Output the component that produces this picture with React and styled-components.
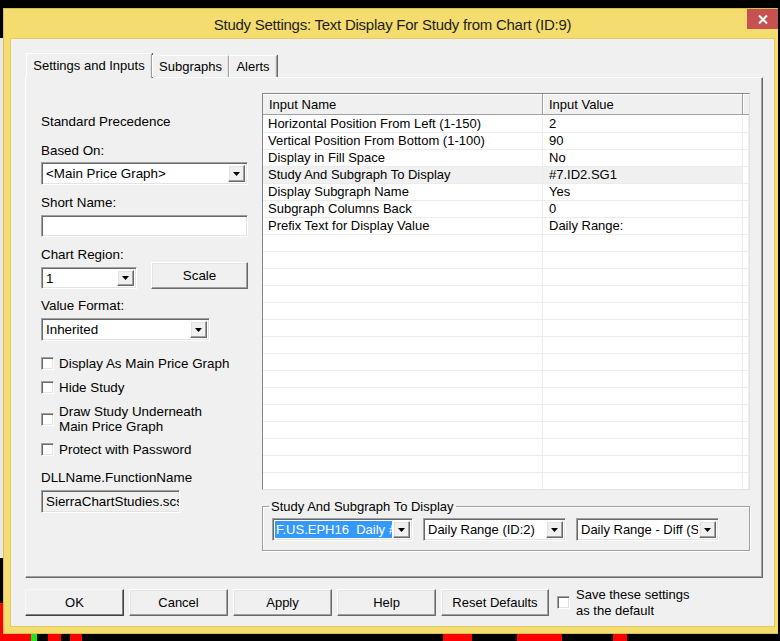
import styled, { createGlobalStyle } from "styled-components";

const GlobalStyle = createGlobalStyle`
  html, body {
    margin: 0;
    padding: 0;
    background: #000;
  }
  * {
    box-sizing: border-box;
  }
`;

const YELLOW = "#f4dd6e";

const Desktop = styled.div`
  width: 780px;
  height: 641px;
  overflow: hidden;
  padding: 8px 0 0 3px;
  font-family: "Liberation Sans", Arial, sans-serif;
  font-size: 13px;
  color: #000;
  background-color: #000;
  background-image:
    linear-gradient(#e9e9e9, #e9e9e9),
    linear-gradient(#ff0000, #ff0000),
    linear-gradient(#ff0000, #ff0000),
    linear-gradient(#19e619, #19e619),
    linear-gradient(#ff0000, #ff0000),
    linear-gradient(#ff0000, #ff0000),
    linear-gradient(#ff0000, #ff0000),
    linear-gradient(#ff0000, #ff0000),
    linear-gradient(#ff0000, #ff0000);
  background-repeat: no-repeat;
  background-size:
    3px 520px,
    3px 40px,
    31px 8px,
    6px 8px,
    13px 8px,
    12px 8px,
    29px 8px,
    45px 8px,
    14px 8px;
  background-position:
    0 38px,
    0 603px,
    0 634px,
    31px 634px,
    48px 634px,
    70px 634px,
    443px 634px,
    517px 634px,
    613px 634px;
`;

const Window = styled.div`
  width: 775px;
  height: 626px;
  background: ${YELLOW};
  border: 1px solid #d6bf57;
  border-right: none;
  padding: 0 3px 6px 6px;
  display: flex;
  flex-direction: column;
`;

const TitleBar = styled.div`
  position: relative;
  height: 29px;
  display: flex;
  align-items: center;
  justify-content: center;
  padding-top: 1px;
`;

const Title = styled.div`
  font-size: 15px;
  color: #1f1f1f;
  letter-spacing: -0.25px;
`;

const CloseButton = styled.div`
  position: absolute;
  top: 0;
  right: -3px;
  width: 31px;
  height: 20px;
  background: #c75050;
  display: flex;
  align-items: center;
  justify-content: center;
`;

const Client = styled.div`
  flex: 1;
  background: #f0f0f0;
  border: 1px solid #e2cb62;
  padding: 14px 12px 0 14px;
  display: flex;
  flex-direction: column;
`;

const TabStrip = styled.div`
  display: flex;
  align-items: flex-end;
  height: 24px;
  padding-left: 1px;
  position: relative;
  z-index: 1;
`;

const Tab = styled.div`
  width: ${(p) => p.$width}px;
  height: ${(p) => (p.$active ? "25px" : "22px")};
  margin-bottom: ${(p) => (p.$active ? "-1px" : "0")};
  padding-bottom: ${(p) => (p.$active ? "2px" : "0")};
  background: #f0f0f0;
  border-top: 1px solid #fff;
  border-left: 1px solid #fff;
  border-right: 1px solid #a0a0a0;
  box-shadow: inset -1px 0 0 #e3e3e3, 1px 0 0 #696969;
  display: flex;
  align-items: center;
  justify-content: center;
  white-space: nowrap;
`;

const Panel = styled.div`
  width: 738px;
  height: 501px;
  border-top: 1px solid #fff;
  border-left: 1px solid #fff;
  border-right: 1px solid #696969;
  border-bottom: 1px solid #696969;
  box-shadow: inset -1px -1px 0 #a0a0a0;
  padding: 15px 12px 0 15px;
  display: flex;
  gap: 14px;
`;

const LeftColumn = styled.div`
  width: 207px;
  display: flex;
  flex-direction: column;
  font-size: 13.4px;
`;

const Label = styled.div`
  line-height: 15px;
  margin-top: ${(p) => p.$mt || 0}px;
  white-space: nowrap;
`;

const sunken = `
  border: 1px solid;
  border-color: #a0a0a0 #fff #fff #a0a0a0;
  box-shadow: inset 1px 1px 0 #696969, inset -1px -1px 0 #e3e3e3;
`;

const raised = `
  border: 1px solid;
  border-color: #fff #696969 #696969 #fff;
  box-shadow: inset -1px -1px 0 #a0a0a0, inset 1px 1px 0 #e3e3e3;
  background: #f0f0f0;
`;

const Combo = styled.div`
  ${sunken}
  width: ${(p) => p.$width}px;
  height: ${(p) => p.$height || 23}px;
  margin-top: ${(p) => p.$mt || 0}px;
  background: #fff;
  display: flex;
  align-items: stretch;
  padding: 2px;
  flex-shrink: 0;
`;

const ComboField = styled.div`
  flex: 1;
  min-width: 0;
  overflow: hidden;
  white-space: nowrap;
  display: flex;
  align-items: center;
  padding-left: ${(p) => (p.$selected ? "1px" : "2px")};
  margin-right: 1px;
  background: ${(p) => (p.$selected ? "#3399ff" : "transparent")};
  color: ${(p) => (p.$selected ? "#fff" : "#000")};
`;

const DropButton = styled.div`
  ${raised}
  width: 17px;
  flex-shrink: 0;
  display: flex;
  align-items: center;
  justify-content: center;
`;

const Arrow = () => (
  <svg width="7" height="4" viewBox="0 0 7 4">
    <polygon points="0,0 7,0 3.5,4" fill="#000" />
  </svg>
);

const DropDown = ({ width, height, mt, selected, children }) => (
  <Combo $width={width} $height={height} $mt={mt}>
    <ComboField $selected={selected}>{children}</ComboField>
    <DropButton>
      <Arrow />
    </DropButton>
  </Combo>
);

const TextBox = styled.div`
  ${sunken}
  width: ${(p) => p.$width}px;
  height: ${(p) => p.$height || 22}px;
  margin-top: ${(p) => p.$mt || 0}px;
  background: ${(p) => (p.$readonly ? "#f0f0f0" : "#fff")};
  padding: 0 4px;
  display: flex;
  align-items: center;
  overflow: hidden;
  white-space: nowrap;
`;

const RegionRow = styled.div`
  display: flex;
  justify-content: space-between;
  align-items: flex-start;
`;

const Button = styled.div`
  ${raised}
  width: ${(p) => p.$width}px;
  height: ${(p) => p.$height || 27}px;
  margin-top: ${(p) => p.$mt || 0}px;
  flex-shrink: 0;
  display: flex;
  align-items: center;
  justify-content: center;
  white-space: nowrap;
  ${(p) =>
    p.$default &&
    `
    border-color: #f8f8f8 #404040 #404040 #f8f8f8;
    box-shadow: inset -1px -1px 0 #808080;
  `}
`;

const CheckRow = styled.div`
  display: flex;
  align-items: center;
  gap: 5px;
  margin-top: ${(p) => p.$mt || 0}px;
  line-height: 15px;
`;

const CheckBox = styled.div`
  width: 13px;
  height: 13px;
  flex-shrink: 0;
  background: #fff;
  border: 1px solid;
  border-color: #a0a0a0 #fff #fff #a0a0a0;
  box-shadow: inset 1px 1px 0 #696969, inset -1px -1px 0 #e3e3e3;
`;

const RightColumn = styled.div`
  width: 488px;
  display: flex;
  flex-direction: column;
`;

const ListView = styled.div`
  width: 488px;
  height: 397px;
  background: #fff;
  border: 1px solid;
  border-color: #828790 #e3e3e3 #e3e3e3 #828790;
  overflow: hidden;
`;

const COLS = "280px 200px 1fr";

const ListHeader = styled.div`
  display: grid;
  grid-template-columns: ${COLS};
  height: 21px;
  background: #f0f0f0;
  border-bottom: 1px solid #a0a0a0;
  box-shadow: inset 0 1px 0 #fff;
`;

const HeaderCell = styled.div`
  display: flex;
  align-items: center;
  padding-left: 6px;
  border-right: 1px solid #a0a0a0;
  box-shadow: 1px 0 0 #fff;
  white-space: nowrap;
  padding-top: 1px;
`;

const ListBody = styled.div`
  display: flex;
  flex-direction: column;
  padding-top: 1px;
`;

const ListRow = styled.div`
  display: grid;
  grid-template-columns: ${COLS};
  height: 17px;
  flex-shrink: 0;
  border-bottom: 1px solid #ececec;
  line-height: 16px;

  & > span:not(:last-child) {
    background: ${(p) => (p.$hl ? "#f0f0f0" : "transparent")};
  }
`;

const Cell = styled.span`
  padding-left: ${(p) => p.$pl || 5}px;
  border-right: 1px solid #ececec;
  white-space: nowrap;
  overflow: hidden;
`;

const GroupBox = styled.fieldset`
  margin: 9px 0 0 0;
  width: 488px;
  border: 1px solid #a0a0a0;
  box-shadow: inset 1px 1px 0 #fff, 1px 1px 0 #fff;
  padding: 4px 0 9px 9px;
  min-width: 0;
  display: flex;
`;

const Legend = styled.legend`
  padding: 0 2px;
  margin-left: -3px;
  line-height: 15px;
  white-space: nowrap;
`;

const ComboRow = styled.div`
  display: flex;
  gap: 10px;
`;

const Footer = styled.div`
  display: flex;
  align-items: center;
  height: 27px;
  margin-top: 11px;
  gap: 5px;
`;

const SaveCheck = styled.div`
  display: flex;
  align-items: center;
  gap: 6px;
  margin-left: 3px;
  line-height: 16px;
  white-space: nowrap;
`;

const rows = [
  ["Horizontal Position From Left (1-150)", "2"],
  ["Vertical Position From Bottom (1-100)", "90"],
  ["Display in Fill Space", "No"],
  ["Study And Subgraph To Display", "#7.ID2.SG1"],
  ["Display Subgraph Name", "Yes"],
  ["Subgraph Columns Back", "0"],
  ["Prefix Text for Display Value", "Daily Range:"],
];

const EMPTY_ROWS = 16;

export default function App() {
  return (
    <>
      <GlobalStyle />
      <Desktop>
        <Window>
          <TitleBar>
            <Title>Study Settings: Text Display For Study from Chart (ID:9)</Title>
            <CloseButton>
              <svg width="10" height="9" viewBox="0 0 10 9">
                <path d="M1 0.5 L9 8.5 M9 0.5 L1 8.5" stroke="#fff" strokeWidth="2" />
              </svg>
            </CloseButton>
          </TitleBar>

          <Client>
            <TabStrip>
              <Tab $active $width={126}>Settings and Inputs</Tab>
              <Tab $width={77}>Subgraphs</Tab>
              <Tab $width={48}>Alerts</Tab>
            </TabStrip>

            <Panel>
              <LeftColumn>
                <Label $mt={21}>Standard Precedence</Label>
                <Label $mt={14}>Based On:</Label>
                <DropDown width={207} mt={4}>&lt;Main Price Graph&gt;</DropDown>
                <Label $mt={10}>Short Name:</Label>
                <TextBox $width={207} $mt={5} />
                <Label $mt={10}>Chart Region:</Label>
                <RegionRow>
                  <DropDown width={96} height={22} mt={5}>1</DropDown>
                  <Button $width={97} $height={27}>Scale</Button>
                </RegionRow>
                <Label $mt={9}>Value Format:</Label>
                <DropDown width={169} mt={5}>Inherited</DropDown>
                <CheckRow $mt={15}>
                  <CheckBox />
                  Display As Main Price Graph
                </CheckRow>
                <CheckRow $mt={9}>
                  <CheckBox />
                  Hide Study
                </CheckRow>
                <CheckRow $mt={9}>
                  <CheckBox />
                  <span>
                    Draw Study Underneath
                    <br />
                    Main Price Graph
                  </span>
                </CheckRow>
                <CheckRow $mt={8}>
                  <CheckBox />
                  Protect with Password
                </CheckRow>
                <Label $mt={13}>DLLName.FunctionName</Label>
                <TextBox $width={139} $height={23} $mt={5} $readonly>
                  SierraChartStudies.scsf_TextDisplayForStudyFromChart
                </TextBox>
              </LeftColumn>

              <RightColumn>
                <ListView>
                  <ListHeader>
                    <HeaderCell>Input Name</HeaderCell>
                    <HeaderCell>Input Value</HeaderCell>
                    <HeaderCell />
                  </ListHeader>
                  <ListBody>
                    {rows.map(([name, value], i) => (
                      <ListRow key={name} $hl={i === 3}>
                        <Cell>{name}</Cell>
                        <Cell $pl={6}>{value}</Cell>
                        <Cell />
                      </ListRow>
                    ))}
                    {Array.from({ length: EMPTY_ROWS }).map((_, i) => (
                      <ListRow key={`e${i}`}>
                        <Cell />
                        <Cell />
                        <Cell />
                      </ListRow>
                    ))}
                  </ListBody>
                </ListView>

                <GroupBox>
                  <Legend>Study And Subgraph To Display</Legend>
                  <ComboRow>
                    <DropDown width={141} selected>
                      F.US.EPH16&nbsp; Daily #1
                    </DropDown>
                    <DropDown width={143}>Daily Range (ID:2)</DropDown>
                    <DropDown width={143}>Daily Range - Diff (Sum)</DropDown>
                  </ComboRow>
                </GroupBox>
              </RightColumn>
            </Panel>

            <Footer>
              <Button $width={99} $default>OK</Button>
              <Button $width={99}>Cancel</Button>
              <Button $width={99}>Apply</Button>
              <Button $width={99}>Help</Button>
              <Button $width={108}>Reset Defaults</Button>
              <SaveCheck>
                <CheckBox />
                <span>
                  Save these settings
                  <br />
                  as the default
                </span>
              </SaveCheck>
            </Footer>
          </Client>
        </Window>
      </Desktop>
    </>
  );
}
